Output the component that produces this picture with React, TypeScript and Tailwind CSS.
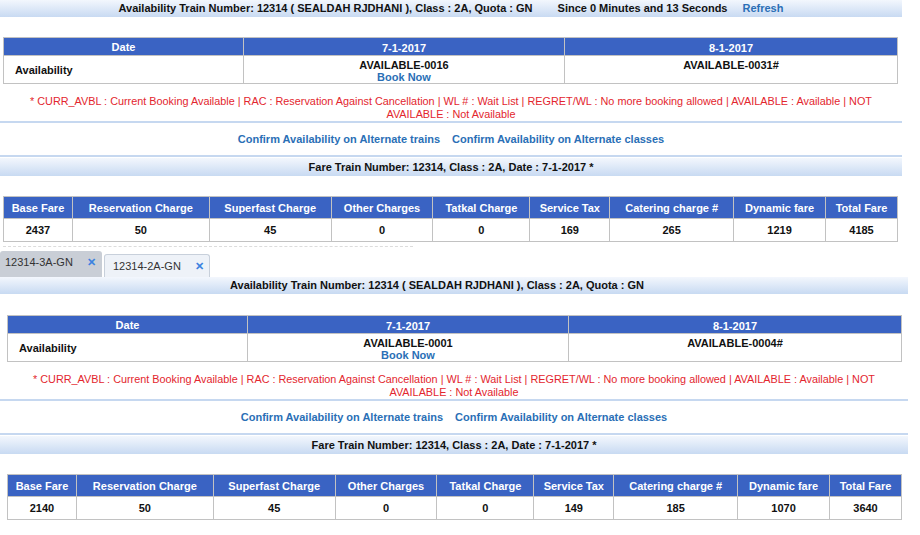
import React from "react";

type Avl = { d1: string; d2: string };
type Fare = string[];

const fareCols = [
  "Base Fare",
  "Reservation Charge",
  "Superfast Charge",
  "Other Charges",
  "Tatkal Charge",
  "Service Tax",
  "Catering charge #",
  "Dynamic fare",
  "Total Fare",
];
const fareW = [69, 137, 122, 102, 97, 80, 124, 92, 72];

function Bar({ children, className = "" }: { children: React.ReactNode; className?: string }) {
  return (
    <div
      className={
        "flex items-center justify-center bg-gradient-to-b from-[#f3f7fd] to-[#c8daf2] text-[11px] font-bold text-[#111] " +
        className
      }
    >
      {children}
    </div>
  );
}

function Section({
  avl,
  fare,
  pad,
  top,
  head,
}: {
  avl: Avl;
  fare: Fare;
  pad: string;
  top: string;
  head: React.ReactNode;
}) {
  return (
    <div>
      {head}
      <div className={top + " " + pad}>
        <table className="w-full border-collapse text-[11px] leading-[12px]">
          <thead>
            <tr className="h-[18px] bg-[#3a63c3] text-white">
              <th className="w-[240px] border border-[#c2c2c2] p-0 font-bold">Date</th>
              <th className="w-[321px] border border-[#c2c2c2] p-0 pt-[3px] font-bold">7-1-2017</th>
              <th className="border border-[#c2c2c2] p-0 pt-[3px] font-bold">8-1-2017</th>
            </tr>
          </thead>
          <tbody>
            <tr className="h-[27px] font-bold text-[#111]">
              <td className="border border-[#c2c2c2] p-0 pl-[11px]">Availability</td>
              <td className="border border-[#c2c2c2] p-0 pt-[3px] text-center align-top">
                {avl.d1}
                <div className="text-[#2a6fb6]">Book Now</div>
              </td>
              <td className="border border-[#c2c2c2] p-0 pt-[3px] text-center align-top">{avl.d2}</td>
            </tr>
          </tbody>
        </table>
      </div>
      <div className="pt-[11px] text-center text-[10.85px] leading-[13px] text-[#e3262e]">
        * CURR_AVBL : Current Booking Available | RAC : Reservation Against Cancellation | WL # : Wait List | REGRET/WL :
        No more booking allowed | AVAILABLE : Available | NOT
        <br />
        AVAILABLE : Not Available
      </div>
      <div className="h-[2px] bg-[#c6d8f0]" />
      <div className="flex h-[32px] items-center justify-center gap-[12px] text-[11px] font-bold text-[#2a6fb6]">
        <span>Confirm Availability on Alternate trains</span>
        <span>Confirm Availability on Alternate classes</span>
      </div>
      <div className="h-[2px] bg-[#c6d8f0]" />
      <Bar className="mt-[1px] h-[18px]">Fare Train Number: 12314, Class : 2A, Date : 7-1-2017 *</Bar>
      <div className={"pt-[20px] " + pad}>
        <table className="w-full border-collapse text-[11px] leading-[12px]">
          <thead>
            <tr className="h-[22px] bg-[#3a63c3] text-white">
              {fareCols.map((c, i) => (
                <th key={c} style={{ width: fareW[i] }} className="border border-[#c2c2c2] p-0 font-bold">
                  {c}
                </th>
              ))}
            </tr>
          </thead>
          <tbody>
            <tr className="h-[23px] font-bold text-[#111]">
              {fare.map((v, i) => (
                <td key={i} className="border border-[#c2c2c2] p-0 text-center">
                  {v}
                </td>
              ))}
            </tr>
          </tbody>
        </table>
      </div>
    </div>
  );
}

function X() {
  return <span className="text-[11px] font-bold text-[#3b82e0]">✕</span>;
}

export default function App() {
  return (
    <div className="h-[535px] w-[920px] overflow-hidden bg-white font-['Liberation_Sans',Arial,sans-serif]">
      <div className="w-[902px]">
        <Section
          pad="pl-[3px] pr-[4px]"
          top="pt-[20px]"
          avl={{ d1: "AVAILABLE-0016", d2: "AVAILABLE-0031#" }}
          fare={["2437", "50", "45", "0", "0", "169", "265", "1219", "4185"]}
          head={
            <Bar className="h-[17px]">
              <span>Availability Train Number: 12314 ( SEALDAH RJDHANI ), Class : 2A, Quota : GN</span>
              <span className="ml-[25px]">Since 0 Minutes and 13 Seconds</span>
              <span className="ml-[15px] text-[#2a6fb6]">Refresh</span>
            </Bar>
          }
        />
      </div>
      <div className="mt-[4px] ml-[3px] h-[1px] w-[410px] border-t border-dashed border-[#dcdcdc]" />
      <div className="mt-[4px] flex items-end gap-[2px] text-[11px] text-[#333]">
        <div className="flex h-[26px] w-[102px] items-center gap-[14px] rounded-t-[3px] bg-[#c9ced6] pl-[5px] pb-[3px]">
          <span>12314-3A-GN</span>
          <X />
        </div>
        <div className="flex h-[23px] w-[106px] items-center gap-[14px] rounded-t-[3px] border border-b-0 border-[#c8d0db] bg-[#eef2f8] pl-[8px] pt-[1px]">
          <span>12314-2A-GN</span>
          <X />
        </div>
      </div>
      <div className="w-[908px]">
        <Section
          pad="pl-[7px] pr-[6px]"
          top="pt-[21px]"
          avl={{ d1: "AVAILABLE-0001", d2: "AVAILABLE-0004#" }}
          fare={["2140", "50", "45", "0", "0", "149", "185", "1070", "3640"]}
          head={
            <Bar className="h-[17px] pr-[34px]">
              Availability Train Number: 12314 ( SEALDAH RJDHANI ), Class : 2A, Quota : GN
            </Bar>
          }
        />
      </div>
    </div>
  );
}
